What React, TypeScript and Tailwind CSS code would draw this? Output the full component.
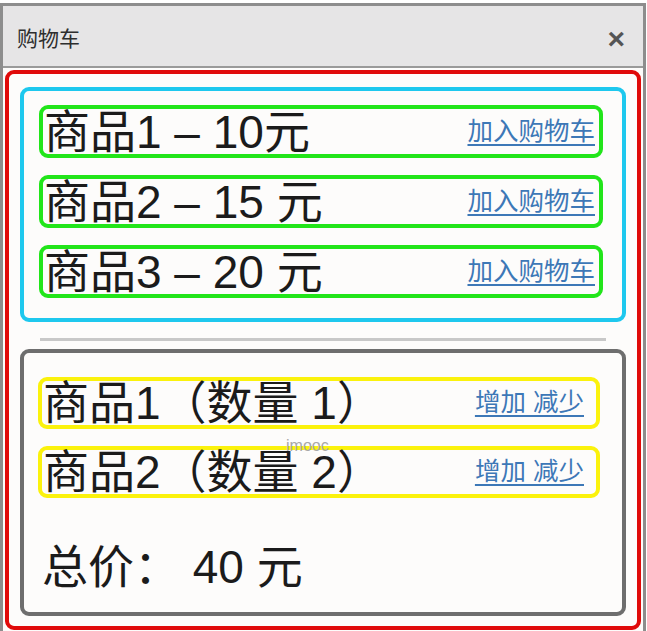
import React from "react";

const font = "font-['Liberation_Sans','Noto_Sans_CJK_SC',sans-serif]";

const products = [
  { label: "商品1 – 10元" },
  { label: "商品2 – 15 元" },
  { label: "商品3 – 20 元" },
];

const cart = [{ label: "商品1（数量 1）" }, { label: "商品2（数量 2）" }];

const App = () => {
  return (
    <div className={`w-[647px] h-[631px] bg-white pt-[3px] ${font}`}>
      <div className="relative h-[628px] w-[646px] border-[3px] border-b-0 border-[#8d8d8d] bg-[#fdfcfb] flex flex-col">
        <div className="h-[62px] shrink-0 bg-[#e6e5e6] border-b-[2px] border-[#9a9a9a] flex items-center justify-between pt-[5px] pl-[14px] pr-[18px]">
          <span className="text-[21px] text-[#2e2e2e]">购物车</span>
          <span className="text-[30px] font-bold text-[#555] leading-none">×</span>
        </div>

        <div className="mx-[2px] mt-[2px] flex-1 mb-[1px] rounded-[9px] border-[4px] border-[#e00a0a] pt-[13px] pl-[11px] pr-[11px] pb-[10px] flex flex-col">
          {/* product list */}
          <div className="h-[235px] rounded-[9px] border-[4px] border-[#1ec8ee] pt-[14px] pl-[15px] pr-[19px] flex flex-col gap-[17px]">
            {products.map((p) => (
              <div
                key={p.label}
                className="h-[53px] rounded-[9px] border-[4px] border-[#22e51a] flex items-center justify-between pl-[1px] pr-[4px]"
              >
                <span className="text-[46px] leading-none text-[#1b1b1b]">{p.label}</span>
                <a href="#" className="text-[25.5px] leading-none text-[#3d78b7] underline underline-offset-[4px]">
                  加入购物车
                </a>
              </div>
            ))}
          </div>

          <div className="mt-[16px] mx-[20px] h-[3px] bg-[#c8c8c8]" />

          {/* cart */}
          <div className="relative mt-[8px] flex-1 rounded-[9px] border-[4px] border-[#6e6e6e] pt-[24px] pl-[14px] pr-[22px] flex flex-col">
            <div className="flex flex-col gap-[17px]">
              {cart.map((c) => (
                <div
                  key={c.label}
                  className="h-[52px] rounded-[9px] border-[4px] border-[#fbf20c] flex items-center justify-between pl-[1px] pr-[12px]"
                >
                  <span className="text-[46px] leading-none text-[#1b1b1b]">{c.label}</span>
                  <a href="#" className="text-[25.5px] leading-none text-[#3d78b7] underline underline-offset-[4px]">
                    增加 减少
                  </a>
                </div>
              ))}
            </div>
            <div className="mt-[46px] pl-[4px] text-[46px] leading-none text-[#1b1b1b]">总价： 40 元</div>
            <span className="absolute left-[262px] top-[85px] text-[16px] text-[#a8a8a8] leading-none">imooc</span>
          </div>
        </div>
      </div>
    </div>
  );
};

export default App;
